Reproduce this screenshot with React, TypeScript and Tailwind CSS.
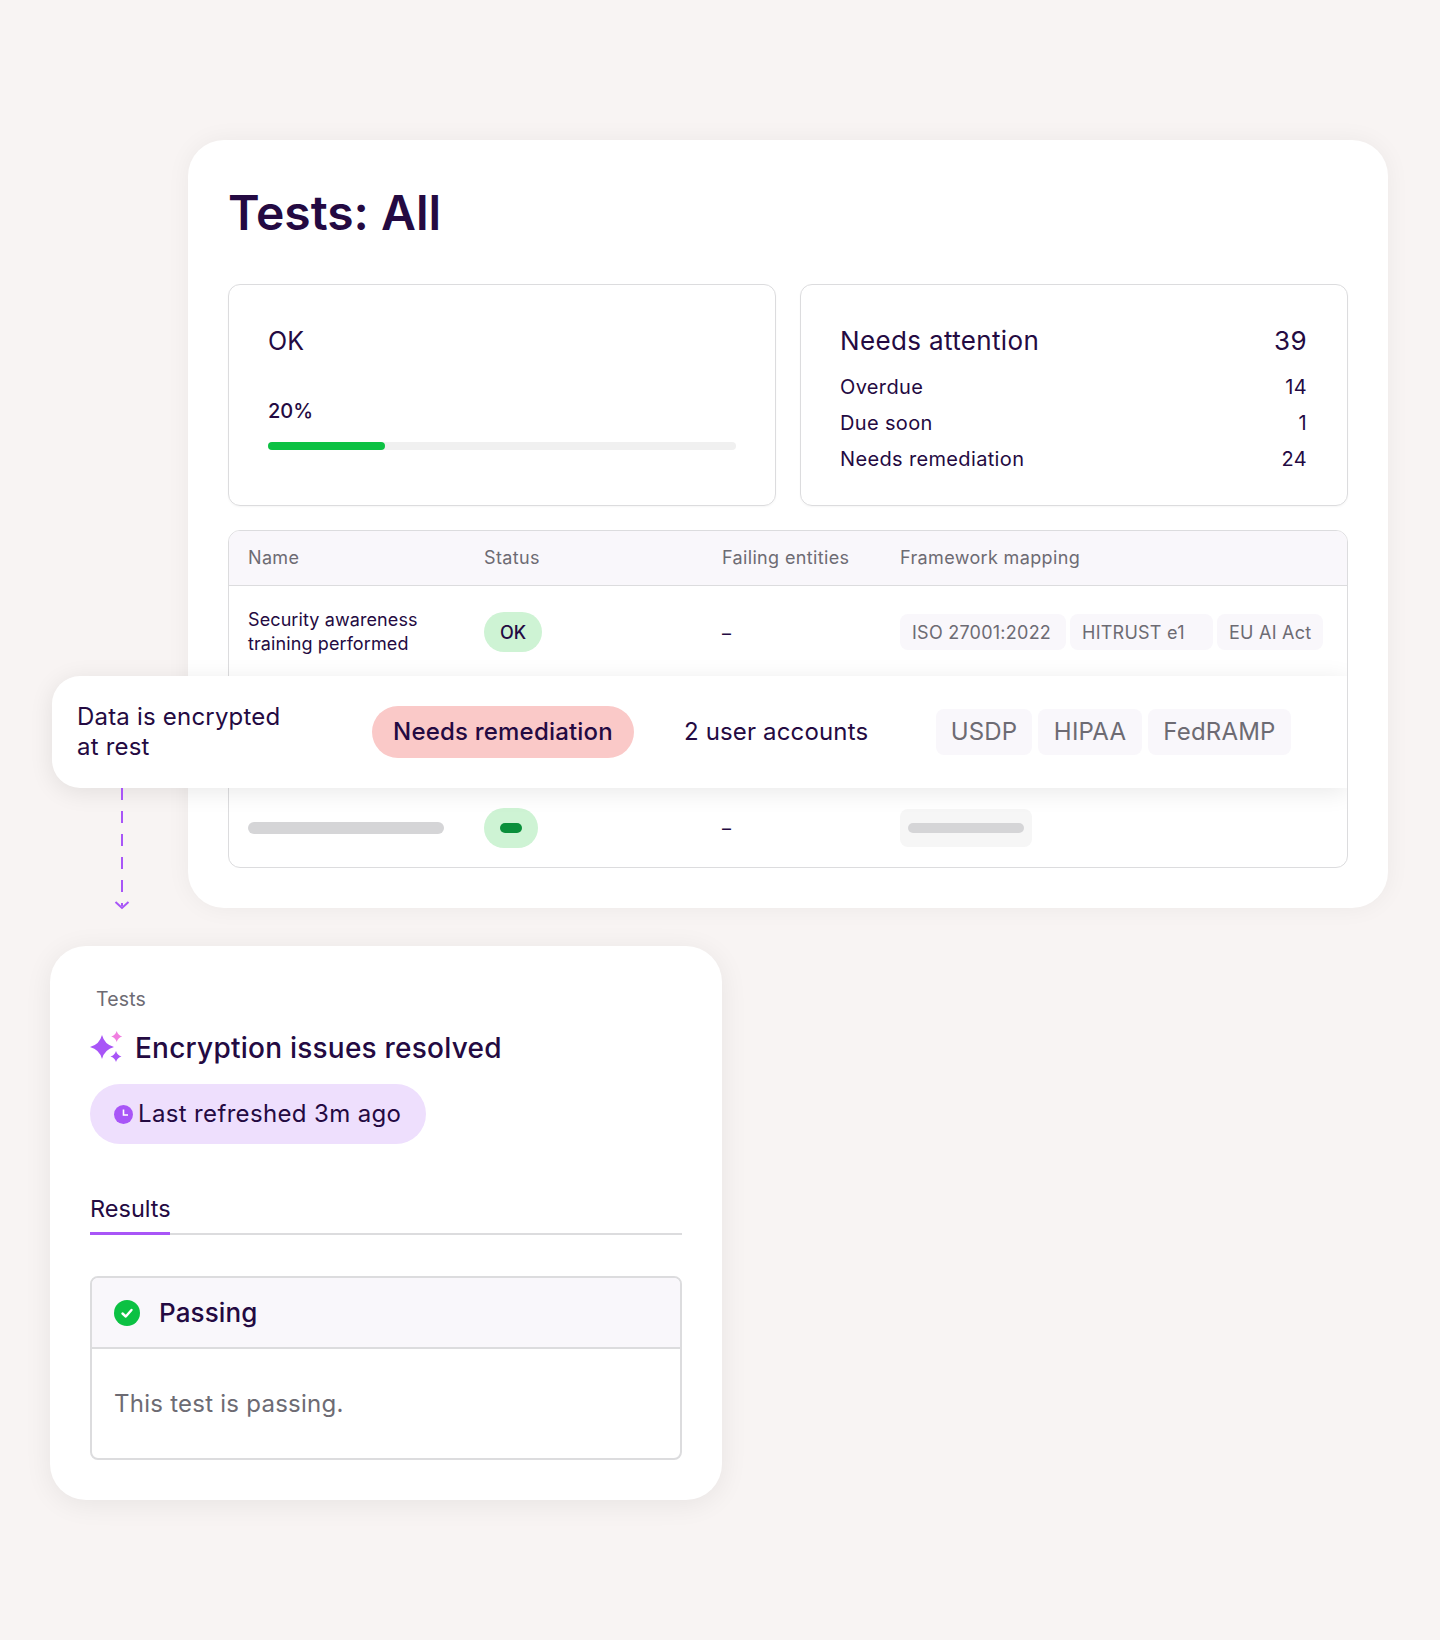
import React from "react";

const tagSm = "h-9 flex items-center rounded-lg bg-[#f9f7fb] text-[18px] tracking-[0.25px] text-[#6d6b73] pl-3";

function Sparkle() {
  return (
    <svg width="34" height="36" viewBox="0 0 34 36" className="shrink-0">
      <path d="M12 5 Q14.5 14.5 24 17 Q14.5 19.5 12 29 Q9.5 19.5 0 17 Q9.5 14.5 12 5Z" fill="#a855f7" />
      <path d="M26.7 1 Q28 5.2 32.2 6.5 Q28 7.8 26.7 12 Q25.4 7.8 21.2 6.5 Q25.4 5.2 26.7 1Z" fill="#f07fe0" />
      <path d="M26 21 Q27.3 25.2 31.5 26.5 Q27.3 27.8 26 32 Q24.7 27.8 20.5 26.5 Q24.7 25.2 26 21Z" fill="#a855f7" />
    </svg>
  );
}

export default function App() {
  return (
    <div className="relative w-[1440px] h-[1640px] bg-[#f8f4f3] pt-[140px] overflow-hidden text-[#240a42] [font-family:Inter,sans-serif]">
      {/* Main card */}
      <div className="ml-[188px] w-[1200px] h-[768px] rounded-[36px] bg-white px-10 pt-[45px] shadow-[0_0_24px_rgba(0,0,0,0.05)]">
        <h1 className="text-[48px] leading-[56px] font-semibold">Tests: All</h1>

        <div className="mt-[43px] grid grid-cols-2 gap-6">
          <div className="h-[222px] rounded-xl border border-[#dcdcde] px-[39px] pt-[40px] shadow-[0_1px_2px_rgba(0,0,0,0.04)]">
            <div className="text-[25px] leading-[32px] tracking-[0.2px]">OK</div>
            <div className="mt-[40px] text-[20px] leading-[28px] font-medium">20%</div>
            <div className="mt-[17px] h-2 rounded-full bg-[#f0f0f0]">
              <div className="h-2 w-[25%] rounded-full bg-[#0cc143]" />
            </div>
          </div>
          <div className="h-[222px] rounded-xl border border-[#dcdcde] pl-[39px] pr-10 pt-[40px] shadow-[0_1px_2px_rgba(0,0,0,0.04)]">
            <div className="flex justify-between text-[26px] leading-[32px] tracking-[0.35px]">
              <span>Needs attention</span>
              <span>39</span>
            </div>
            <div className="mt-[12px] flex flex-col text-[20px] leading-[36px] tracking-[0.35px]">
              <div className="flex justify-between"><span>Overdue</span><span>14</span></div>
              <div className="flex justify-between"><span>Due soon</span><span>1</span></div>
              <div className="flex justify-between"><span>Needs remediation</span><span>24</span></div>
            </div>
          </div>
        </div>

        {/* Table */}
        <div className="mt-6 h-[338px] rounded-xl border border-[#dcdcde] overflow-hidden">
          <div className="h-[55px] grid grid-cols-[236px_238px_178px_1fr] items-center px-[19px] pb-[2px] bg-[#f9f7fb] border-b border-[#dcdcde] text-[18px] tracking-[0.35px] text-[#6d6b73]">
            <span>Name</span>
            <span>Status</span>
            <span>Failing entities</span>
            <span>Framework mapping</span>
          </div>
          <div className="h-[92px] grid grid-cols-[236px_238px_178px_1fr] items-center px-[19px]">
            <div className="text-[18px] leading-[24px] tracking-[0.1px]">Security awareness<br />training performed</div>
            <div className="w-[58px] h-10 rounded-full bg-[#cef3d4] flex items-center justify-center text-[18px] font-medium">OK</div>
            <div className="text-[18px] mt-[2px]">–</div>
            <div className="flex gap-[4px]">
              <div className={tagSm + " w-[166px]"}>ISO 27001:2022</div>
              <div className={tagSm + " w-[143px]"}>HITRUST e1</div>
              <div className={tagSm + " w-[106px]"}>EU AI Act</div>
            </div>
          </div>
          <div className="h-[112px]" />
          <div className="h-[76px] grid grid-cols-[236px_238px_178px_1fr] items-center px-[19px]">
            <div className="w-[196px] h-3 rounded-full bg-[#d5d5d7]" />
            <div className="w-[54px] h-10 rounded-full bg-[#cef3d4] flex items-center justify-center">
              <div className="w-[22px] h-[10px] rounded-full bg-[#0a8f3b]" />
            </div>
            <div className="text-[18px]">–</div>
            <div className="w-[132px] h-[38px] rounded-lg bg-[#f6f6f6] flex items-center justify-center">
              <div className="w-[116px] h-[10px] rounded-full bg-[#d5d5d7]" />
            </div>
          </div>
        </div>
      </div>

      {/* Floating highlighted row */}
      <div className="absolute left-[52px] top-[676px] w-[1295px] h-[112px] rounded-l-[28px] bg-white flex items-center pl-[25px] shadow-[0_4px_24px_rgba(0,0,0,0.09)] [clip-path:inset(-40px_0_-40px_-40px)]">
        <div className="w-[295px] text-[24px] leading-[30px] tracking-[0.2px]">Data is encrypted<br />at rest</div>
        <div className="w-[262px] h-[52px] rounded-full bg-[#fac9c8] flex items-center justify-center text-[24px] font-medium tracking-[0.2px]">Needs remediation</div>
        <div className="ml-[50px] w-[252px] text-[24px] tracking-[0.15px]">2 user accounts</div>
        <div className="flex gap-[6px] text-[24px] tracking-[0.2px] text-[#6d6b73]">
          <div className="w-[96px] h-[46px] rounded-lg bg-[#f9f7fb] flex items-center justify-center">USDP</div>
          <div className="w-[104px] h-[46px] rounded-lg bg-[#f9f7fb] flex items-center justify-center">HIPAA</div>
          <div className="w-[143px] h-[46px] rounded-lg bg-[#f9f7fb] flex items-center justify-center">FedRAMP</div>
        </div>
      </div>

      {/* Dashed connector */}
      <svg className="absolute left-[114px] top-[788px]" width="16" height="124" viewBox="0 0 16 124" fill="none">
        <line x1="8" y1="0" x2="8" y2="118" stroke="#a855f7" strokeWidth="2" strokeDasharray="12 11" />
        <path d="M1.5 114 L8 120 L14.5 114" stroke="#a855f7" strokeWidth="2" />
      </svg>

      {/* Bottom card */}
      <div className="mt-[38px] ml-[50px] w-[672px] h-[554px] rounded-[36px] bg-white px-10 pt-[41px] shadow-[0_4px_28px_rgba(0,0,0,0.07)]">
        <div className="pl-[6px] text-[19.5px] leading-[24px] tracking-[0.15px] text-[#6d6b73]">Tests</div>
        <div className="mt-[19px] flex items-center h-9 gap-[11px]">
          <Sparkle />
          <span className="text-[28px] leading-9 font-medium tracking-[0.23px]">Encryption issues resolved</span>
        </div>
        <div className="mt-[18px] w-[336px] h-[60px] rounded-full bg-[#eedffd] flex items-center pl-6 gap-[5px]">
          <svg width="19" height="19" viewBox="0 0 19 19" className="shrink-0">
            <circle cx="9.5" cy="9.5" r="9.5" fill="#a855f7" />
            <path d="M9.5 4.5 V10 H14" stroke="#fff" strokeWidth="1.6" fill="none" />
          </svg>
          <span className="text-[24px] leading-8 tracking-[0.35px]">Last refreshed 3m ago</span>
        </div>
        <div className="mt-[50px] border-b-2 border-[#dcdcde]">
          <div className="w-[80px] -mb-[2px] border-b-[3px] border-[#a855f7] text-[23.5px] leading-[30px] pb-[8px]">Results</div>
        </div>
        <div className="mt-[41px] h-[184px] rounded-lg border-2 border-[#dcdcde] overflow-hidden">
          <div className="h-[71px] flex items-center pl-[22px] gap-[19px] bg-[#f9f7fb] border-b-2 border-[#dcdcde]">
            <svg width="26" height="26" viewBox="0 0 26 26" className="shrink-0">
              <circle cx="13" cy="13" r="13" fill="#0cc143" />
              <path d="M8.5 13.5 L11.8 16.5 L17.5 10" stroke="#fff" strokeWidth="2.4" fill="none" strokeLinecap="round" strokeLinejoin="round" />
            </svg>
            <span className="text-[26px] font-medium tracking-[0.1px]">Passing</span>
          </div>
          <div className="pl-[22px] pt-[39px] text-[24px] leading-[32px] tracking-[0.25px] text-[#6d6b73]">This test is passing.</div>
        </div>
      </div>
    </div>
  );
}
